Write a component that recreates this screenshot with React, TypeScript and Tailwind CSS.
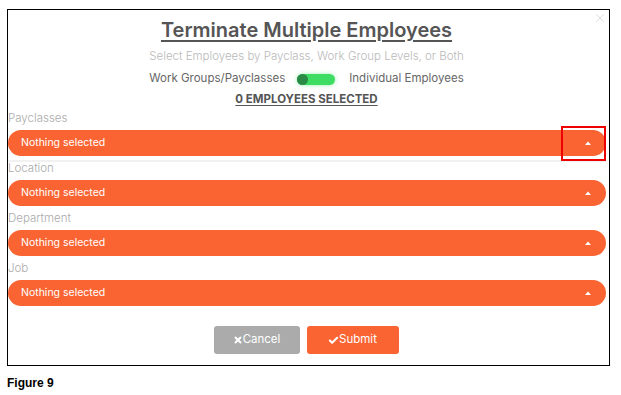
import { X, Check } from "lucide-react";

const groups = ["Payclasses", "Location", "Department", "Job"];

function Caret() {
  return (
    <svg width="6" height="4" viewBox="0 0 6 4" className="shrink-0">
      <path d="M0 4 L3 0.5 L6 4 Z" fill="#ffffff" />
    </svg>
  );
}

export default function App() {
  return (
    <div className="pl-[7px] pt-[9px] bg-white w-[621px] h-[395px]">
      {/* Modal frame */}
      <div
        className="relative w-[603px] h-[357px] border border-black bg-white overflow-hidden"
        style={{ fontFamily: "Inter, 'Open Sans', sans-serif" }}
      >
        <button className="absolute right-[2px] top-[1px] text-[#cfcfcf]">
          <X className="w-[14px] h-[14px]" strokeWidth={1.2} />
        </button>

        <div className="flex flex-col items-center pr-[4px]">
          <h1 className="mt-[8px] h-[24px] leading-[24px] text-[20px] font-semibold text-[#555] underline underline-offset-[3px] decoration-[1.5px]">
            Terminate Multiple Employees
          </h1>
          <p className="mt-[6px] h-[16px] leading-[16px] text-[11.5px] font-light text-[#b9b9b9]">
            Select Employees by Payclass, Work Group Levels, or Both
          </p>
          <div className="mt-[7px] h-[16px] flex items-center text-[11.5px] text-[#666]">
            <span>Work Groups/Payclasses</span>
            <div className="ml-[12px] mr-[14px] w-[38px] h-[11px] rounded-full bg-[#3ddc62] shadow-[0_0_4px_rgba(61,220,98,0.5)] flex items-center">
              <div className="w-[11px] h-[11px] rounded-full bg-[#2a8a45]" />
            </div>
            <span>Individual Employees</span>
          </div>
          <p className="mt-[5px] h-[14px] leading-[14px] text-[11.5px] font-bold text-[#555] underline underline-offset-2">
            0 EMPLOYEES SELECTED
          </p>
        </div>

        <div className="mt-[6px] flex flex-col pr-[3px]">
          {groups.map((g, i) => (
            <div key={g} className="flex flex-col">
              <span className={`h-[12px] leading-[12px] text-[11.5px] font-light text-[#ababab] ${i === 0 ? "" : "mt-[6px]"}`}>
                {g}
              </span>
              <div className="mt-[6px] h-[26px] rounded-full bg-[#fa6433] flex items-center justify-between pl-[13px] pr-[15px]">
                <span className="text-[10.5px] font-normal text-white">Nothing selected</span>
                <Caret />
              </div>
              {i === 0 && <div className="mt-[4px] -mb-[6px] h-[2px] bg-[#f1f1f1]" />}
            </div>
          ))}
        </div>

        <div className="mt-[20px] flex justify-center gap-[7px] pr-[5px]">
          <button className="w-[86px] h-[28px] rounded-[3px] bg-[#ababab] text-white text-[11.5px] flex items-center justify-center">
            <X className="w-[10px] h-[10px]" strokeWidth={4.5} />
            <span>Cancel</span>
          </button>
          <button className="w-[92px] h-[28px] rounded-[3px] bg-[#fa6433] text-white text-[11.5px] flex items-center justify-center">
            <Check className="w-[11px] h-[11px]" strokeWidth={4.5} />
            <span>Submit</span>
          </button>
        </div>

        {/* highlight box over the first dropdown's caret */}
        <div className="absolute left-[553px] top-[116px] w-[45px] h-[35px] border-2 border-[#ee0000]" />
      </div>

      <p className="mt-[10px] h-[14px] leading-[14px] text-[12px] font-bold text-black" style={{ fontFamily: "'Liberation Sans', Arial, sans-serif" }}>
        Figure 9
      </p>
    </div>
  );
}
